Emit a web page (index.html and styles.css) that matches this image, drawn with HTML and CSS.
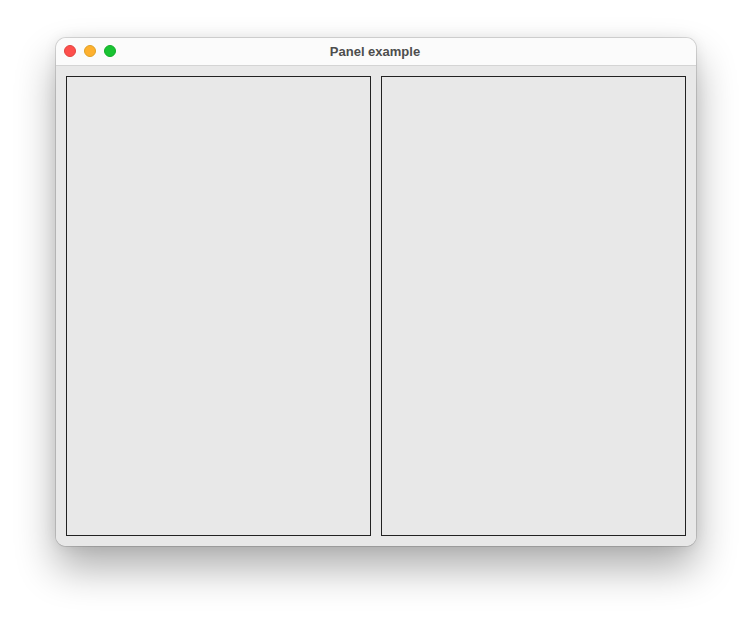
FILE: index.html
```html
<!DOCTYPE html>
<html>
<head>
    <title>Panel example</title>
    <link rel="stylesheet" href="styles.css">
</head>
<body>
    <div class="desktop">
        <div class="window">
            <div class="title-bar">
                <div class="lights">
                    <span class="light red"></span>
                    <span class="light yellow"></span>
                    <span class="light green"></span>
                </div>
                <div class="title">Panel example</div>
            </div>
            <div class="content">
                <div class="panel"></div>
                <div class="panel"></div>
            </div>
        </div>
    </div>
</body>
</html>
```

FILE: styles.css
```css
body {
    margin: 0;
    background-color: #ffffff;
    font-family: "Liberation Sans", Arial, sans-serif;
}

.desktop {
    min-height: 620px;
    box-sizing: border-box;
    padding: 38px 56px 74px 56px;
}

.window {
    width: 640px;
    height: 508px;
    border-radius: 10px;
    overflow: hidden;
    box-shadow: 0 0 0 1px rgba(0, 0, 0, 0.13), 0 22px 40px rgba(0, 0, 0, 0.32), 0 0 14px rgba(0, 0, 0, 0.08);
    display: flex;
    flex-direction: column;
}

.title-bar {
    position: relative;
    height: 28px;
    box-sizing: border-box;
    background-color: #fbfbfb;
    border-bottom: 1px solid #d4d4d4;
    display: flex;
    align-items: center;
    justify-content: center;
}

.lights {
    position: absolute;
    left: 8px;
    top: 7px;
    display: flex;
    gap: 8px;
}

.light {
    width: 12px;
    height: 12px;
    border-radius: 50%;
    box-sizing: border-box;
}

.red {
    background-color: #fe4f4c;
    border: 0.5px solid #e0443e;
}

.yellow {
    background-color: #feb02e;
    border: 0.5px solid #dea123;
}

.green {
    background-color: #19c332;
    border: 0.5px solid #12ac28;
}

.title {
    font-size: 13px;
    font-weight: bold;
    color: #4d4d4d;
    margin-left: -2px;
}

.content {
    flex: 1;
    background-color: #e8e8e8;
    padding: 10px;
    display: flex;
    gap: 10px;
}

.panel {
    flex: 1;
    border: 1px solid #222222;
    background-color: #e8e8e8;
}
```
